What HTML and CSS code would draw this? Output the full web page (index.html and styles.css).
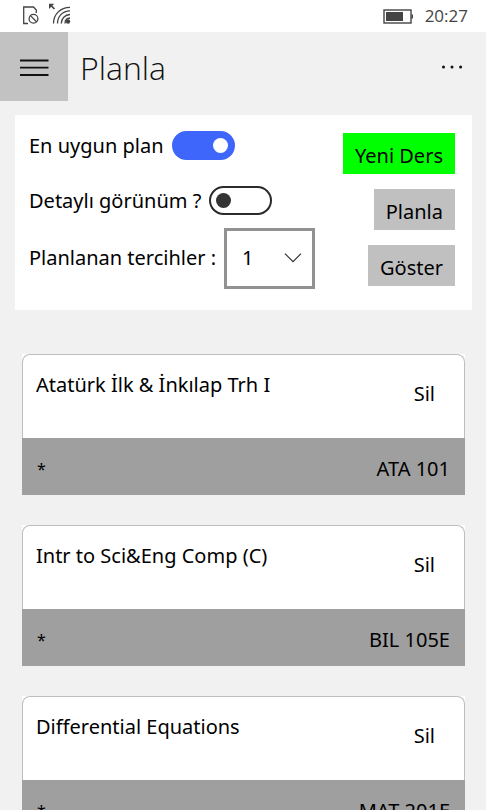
FILE: index.html
```html
<!DOCTYPE html>
<html lang="tr">
<head>
<meta charset="utf-8">
<meta name="viewport" content="width=device-width, initial-scale=1">
<title>Planla</title>
<link rel="stylesheet" href="styles.css">
</head>
<body>
<div class="status">
  <svg class="status-icons" width="52" height="24" viewBox="0 0 52 24" fill="none" stroke="#444" stroke-width="1.3" aria-hidden="true">
    <path d="M6 20.500H1.700V4H11.500L14.300 7V10"/>
    <circle cx="11.500" cy="15.700" r="4.400"/>
    <path d="M8.400 12.600L14.600 18.800"/>
    <path d="M28 1.500L32.500 6" stroke-width="1.700"/>
    <path d="M27 6V.800H32.200Z" fill="#444" stroke="none"/>
    <path d="M31.500 20.500C31.500 11.500 38 4.500 48 4.300M35.500 20.500C35.500 13.500 40.300 8.100 48 7.900M39.300 20.500C39.300 15.500 43 11.700 48 11.500M43 20.500C43 17.500 45 15.200 48 15"/>
    <circle cx="46" cy="18.500" r="2.200" fill="#444" stroke="none"/>
  </svg>
  <svg class="battery" width="30" height="15" viewBox="0 0 30 15" aria-hidden="true">
    <rect x="1" y="1" width="27" height="13" fill="none" stroke="#444" stroke-width="1.400"/>
    <rect x="3" y="3" width="17" height="9" fill="#444"/>
    <rect x="28.500" y="5.500" width="1.500" height="4" fill="#444"/>
  </svg>
  <span class="clock">20:27</span>
</div>
<header class="topbar">
  <button class="menu" type="button" aria-label="Menü">
    <svg width="30" height="18" viewBox="0 0 30 18" stroke="#111" stroke-width="1.800"><path d="M1 1.500H29.500M1 8.700H29.500M1 16H29.500"/></svg>
  </button>
  <h1>Planla</h1>
  <button class="more" type="button" aria-label="Diğer">
    <svg width="22" height="4" viewBox="0 0 22 4" fill="#111"><circle cx="2.500" cy="2" r="1.500"/><circle cx="11" cy="2" r="1.500"/><circle cx="19.600" cy="2" r="1.500"/></svg>
  </button>
</header>
<main>
  <section class="panel">
    <div class="options">
      <div class="option"><label for="best">En uygun plan</label><input id="best" class="switch" type="checkbox" checked></div>
      <div class="option"><label for="detail">Detaylı görünüm ?</label><input id="detail" class="switch" type="checkbox"></div>
      <div class="option option-select">
        <label for="count">Planlanan tercihler :</label>
        <div class="select">
          <select id="count"><option>1</option></select>
          <svg width="18" height="10" viewBox="0 0 18 10" fill="none" stroke="#333" stroke-width="1.200" aria-hidden="true"><path d="M1 .700L9 8.700L17 .700"/></svg>
        </div>
      </div>
    </div>
    <div class="actions">
      <button class="btn btn-new" type="button">Yeni Ders</button>
      <button class="btn" type="button">Planla</button>
      <button class="btn" type="button">Göster</button>
    </div>
  </section>
  <ul class="courses">
    <li class="card">
      <div class="card-head"><h2>Atatürk İlk &amp; İnkılap Trh I</h2><button class="delete" type="button">Sil</button></div>
      <div class="card-foot"><span class="mark">*</span><span>ATA 101</span></div>
    </li>
    <li class="card">
      <div class="card-head"><h2>Intr to Sci&amp;Eng Comp (C)</h2><button class="delete" type="button">Sil</button></div>
      <div class="card-foot"><span class="mark">*</span><span>BIL 105E</span></div>
    </li>
    <li class="card">
      <div class="card-head"><h2>Differential Equations</h2><button class="delete" type="button">Sil</button></div>
      <div class="card-foot"><span class="mark">*</span><span>MAT 201E</span></div>
    </li>
  </ul>
</main>
</body>
</html>
```
FILE: styles.css
```css
* { box-sizing: border-box; }

html { scrollbar-width: none; }

body {
  margin: 0;
  background: #f1f1f1;
  color: #000;
  font: 20px/28px "Noto Sans", "Open Sans", sans-serif;
}

button, select {
  font: inherit;
  color: inherit;
  border: 0;
  border-radius: 0;
  background: none;
  padding: 0;
}

h1, h2 { margin: 0; font-size: inherit; font-weight: 400; }

svg { display: block; }

.status {
  display: flex;
  align-items: center;
  height: 32px;
  padding: 0 18px 0 22px;
  background: #fff;
  color: #444;
}

.status-icons { margin-bottom: 2px; }
.battery { margin-left: auto; }

.clock {
  margin-left: 12px;
  font-family: "Open Sans", sans-serif;
  font-size: 17px;
}

.topbar { display: flex; align-items: center; }

.menu {
  display: grid;
  place-items: center;
  width: 68px;
  height: 69px;
  padding-top: 2px;
  background: #c2c2c2;
}

.topbar h1 {
  margin-left: 12px;
  padding-top: 3px;
  font-family: "Open Sans", sans-serif;
  font-size: 32px;
  font-weight: 350;
  line-height: 44px;
  color: #111;
}

.more { margin-left: auto; padding: 17px 23px 16px; }

.panel {
  display: flex;
  justify-content: space-between;
  margin: 14px 14px 0 15px;
  padding: 3px 17px 22px 14px;
  background: #fff;
}

.option {
  display: flex;
  align-items: center;
  gap: 8px;
  height: 55px;
}

.option-select { height: 60px; }

.switch {
  appearance: none;
  display: flex;
  align-items: center;
  width: 63px;
  height: 29px;
  margin: 0;
  padding: 0 5px;
  border: 2px solid #2b2b2b;
  border-radius: 15px;
}

.switch::before {
  content: "";
  width: 15px;
  height: 15px;
  border-radius: 50%;
  background: #333;
}

.switch:checked {
  justify-content: flex-end;
  border-color: #3e66fb;
  background: #3e66fb;
}

.switch:checked::before { background: #fff; }

.select { display: grid; align-items: center; }

.select > * { grid-area: 1 / 1; }

.select select {
  appearance: none;
  width: 91px;
  height: 61px;
  padding: 0 15px;
  border: 3px solid #929292;
  background: #fff;
}

.select svg {
  justify-self: end;
  margin-right: 13px;
  pointer-events: none;
}

.actions {
  display: flex;
  flex-direction: column;
  align-items: flex-end;
  gap: 15px;
  padding-top: 15px;
}

.btn {
  height: 41px;
  padding: 4px 12px 0;
  background: #c0c0c0;
}

.btn-new { background: #0f0; }

.courses {
  display: grid;
  gap: 30px;
  margin: 44px 21px 30px 22px;
  padding: 0;
  list-style: none;
}

.card { background: #fff; }

.card-head {
  display: flex;
  justify-content: space-between;
  align-items: flex-start;
  height: 84px;
  padding: 16px 29px 0 13px;
  border: 1px solid #bebebe;
  border-bottom: 0;
  border-radius: 8px 8px 0 0;
}

.delete { margin-top: 9px; }

.card-foot {
  display: flex;
  justify-content: space-between;
  align-items: center;
  height: 57px;
  padding: 4px 15px 0;
  background: #9f9f9f;
}

.mark { font-size: 16px; }
```
